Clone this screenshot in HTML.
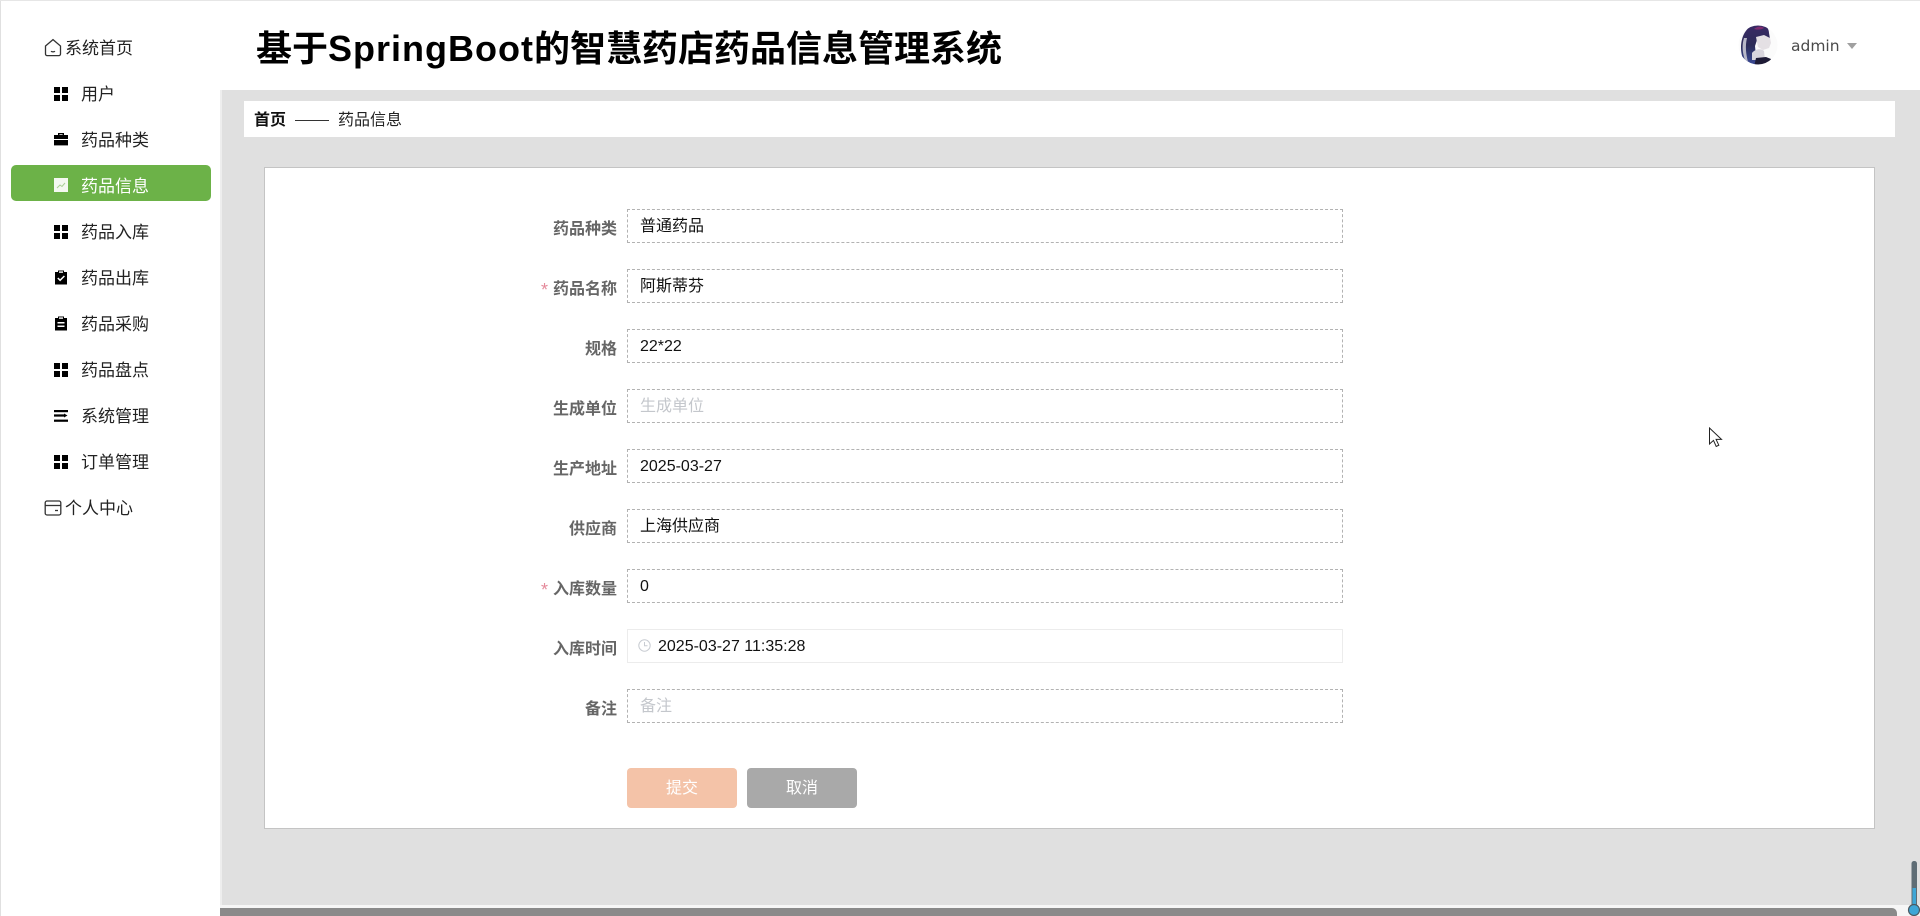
<!DOCTYPE html>
<html lang="zh-CN">
<head>
<meta charset="utf-8">
<title>基于SpringBoot的智慧药店药品信息管理系统</title>
<style>
*{box-sizing:border-box;margin:0;padding:0}
html,body{width:1920px;height:916px;overflow:hidden;background:#e0e0e0;font-family:"Liberation Sans","Noto Sans CJK SC",sans-serif;color:#111}
.a{position:absolute}
.top{left:0;top:0;width:1920px;height:1px;background:#e6e6e6}
.side{left:1px;top:1px;width:219px;height:915px;background:#fff;border-right:0}
.edge{left:220px;top:90px;width:2px;height:826px;background:#eeeeee}
.head{left:220px;top:1px;width:1700px;height:89px;background:#fff}
.title{left:256px;top:24px;font-size:36px;line-height:50px;font-weight:700;color:#000;white-space:nowrap}
.title span{letter-spacing:1px}
.m{height:24px;line-height:24px;font-size:17px;color:#222;white-space:nowrap;margin-top:1px}
.pill{left:11px;top:165px;width:200px;height:36px;background:#6cb248;border-radius:5px}
.ic{position:absolute}
.crumb{left:244px;top:101px;width:1651px;height:36px;background:#fff}
.card{left:264px;top:167px;width:1611px;height:662px;background:#fff;border:1px solid #c4c4c4}
.lb{width:120px;left:497px;height:24px;line-height:24px;text-align:right;font-size:16px;font-weight:700;color:#666;white-space:nowrap;margin-top:2px}
.star{color:#e58a9b;font-size:18px;font-weight:400;left:541px;height:24px;line-height:28px}
.in{left:627px;width:716px;height:34px;border:1px dashed #b2b2b2;background:#fff;padding-left:12px;line-height:34px;font-size:16px;color:#111;white-space:nowrap}
.ph{color:#c4c7cc}
.date{border:1px solid #ececec;padding-left:30px}
.btn{top:768px;width:110px;height:40px;border-radius:4px;color:#fff;text-align:center;line-height:41px;font-size:16px}
</style>
</head>
<body>
<div class="a top"></div>
<div class="a side"></div>
<div class="a edge"></div>
<div class="a head"></div>
<div class="a title">基于<span>SpringBoot</span>的智慧药店药品信息管理系统</div>

<!-- avatar -->
<svg class="a" style="left:1738px;top:22px" width="40" height="46" viewBox="0 0 40 46">
<defs><clipPath id="c"><circle cx="20" cy="23" r="19.5"/></clipPath>
<linearGradient id="h" x1="0" y1="0" x2="0" y2="1"><stop offset="0" stop-color="#3a2a66"/><stop offset=".5" stop-color="#2c2c58"/><stop offset="1" stop-color="#3b4c9a"/></linearGradient></defs>
<g clip-path="url(#c)">
<rect width="40" height="46" fill="#fbfbfb"/>
<path d="M3 26C3 12 10 3 20 2c7 0 11 4 11 9l1 6-5-3-7 1-3 9 2 20H8C5 38 3 32 3 26z" fill="url(#h)"/>
<path d="M6 16c-2 6-2 14 1 22l3 2c-2-8-3-16-1-24z" fill="#b8b8c8"/>
<path d="M18 15l8-2 6 3 1 5-2 5-6 2-5-3z" fill="#e4e0e4"/>
<path d="M14 31c3-4 9-5 12-2l1 9H14z" fill="#d9d6de"/>
<path d="M16 45l2-9 10-1 5 2-2 9z" fill="#1e1b36"/>
<path d="M16 7c3-3 8-3 10-1-3 2-7 2-10 1z" fill="#7d2c70"/>
</g>
</svg>
<div class="a" style="left:1791px;top:34px;line-height:24px;color:#4a4a4a;font-family:'DejaVu Sans','Liberation Sans',sans-serif;font-size:15.5px">admin</div>
<div class="a" style="left:1847px;top:43px;width:0;height:0;border-left:5px solid transparent;border-right:5px solid transparent;border-top:6px solid #a0a0a0"></div>

<!-- sidebar -->
<div class="a pill"></div>

<svg class="ic" style="left:44px;top:38px" width="18" height="19" viewBox="0 0 18 19" fill="none" stroke="#333" stroke-width="1.3"><path d="M1.5 8L9 1.6 16.5 8v8a1.6 1.6 0 0 1-1.6 1.6H3.1A1.6 1.6 0 0 1 1.5 16z"/><path d="M7 13.2c1 .8 3 .8 4 0"/></svg>
<div class="a m" style="left:65px;top:36px">系统首页</div>

<svg class="ic" style="left:54px;top:87px" width="14" height="14" fill="#000"><rect width="6" height="6"/><rect x="8" width="6" height="6"/><rect y="8" width="6" height="6"/><rect x="8" y="8" width="6" height="6"/></svg>
<div class="a m" style="left:81px;top:82px">用户</div>

<svg class="ic" style="left:54px;top:132px" width="14" height="14" viewBox="0 0 14 14"><path d="M4 3V1h6v2h4v4H0V3zM5.4 3h3.2V2.2H5.4z" fill="#000" fill-rule="evenodd"/><path d="M0 8h14v5.4H0z" fill="#000"/></svg>
<div class="a m" style="left:81px;top:128px">药品种类</div>

<svg class="ic" style="left:54px;top:178px" width="14" height="14" viewBox="0 0 14 14"><rect width="14" height="14" fill="#f4f8f1"/><path d="M3 10l3-3 2 1.5L11 5" fill="none" stroke="#a8cf94" stroke-width="1"/></svg>
<div class="a m" style="left:81px;top:174px;color:#fff">药品信息</div>

<svg class="ic" style="left:54px;top:225px" width="14" height="14" fill="#000"><rect width="6" height="6"/><rect x="8" width="6" height="6"/><rect y="8" width="6" height="6"/><rect x="8" y="8" width="6" height="6"/></svg>
<div class="a m" style="left:81px;top:220px">药品入库</div>

<svg class="ic" style="left:54px;top:270px" width="14" height="15" viewBox="0 0 14 15"><path d="M1 2h3V.5h6V2h3v12.5H1z" fill="#000"/><path d="M3.8 8l2.3 2.3L10.4 6" fill="none" stroke="#fff" stroke-width="1.5"/><rect x="5" y="1.4" width="4" height="1.4" fill="#fff"/></svg>
<div class="a m" style="left:81px;top:266px">药品出库</div>

<svg class="ic" style="left:54px;top:316px" width="14" height="15" viewBox="0 0 14 15"><path d="M1 2h3V.5h6V2h3v12.5H1z" fill="#000"/><rect x="3.5" y="6" width="7" height="1.5" fill="#fff"/><rect x="3.5" y="9.5" width="7" height="1.5" fill="#fff"/><rect x="5" y="1.4" width="4" height="1.4" fill="#fff"/></svg>
<div class="a m" style="left:81px;top:312px">药品采购</div>

<svg class="ic" style="left:54px;top:363px" width="14" height="14" fill="#000"><rect width="6" height="6"/><rect x="8" width="6" height="6"/><rect y="8" width="6" height="6"/><rect x="8" y="8" width="6" height="6"/></svg>
<div class="a m" style="left:81px;top:358px">药品盘点</div>

<svg class="ic" style="left:54px;top:410px" width="14" height="12" viewBox="0 0 14 12" fill="#000"><rect width="14" height="2.2"/><path d="M0 4.9h10V4l3.5 2-3.5 2v-.9H0z" transform="translate(0 -.5)"/><rect y="9.6" width="14" height="2.2"/></svg>
<div class="a m" style="left:81px;top:404px">系统管理</div>

<svg class="ic" style="left:54px;top:455px" width="14" height="14" fill="#000"><rect width="6" height="6"/><rect x="8" width="6" height="6"/><rect y="8" width="6" height="6"/><rect x="8" y="8" width="6" height="6"/></svg>
<div class="a m" style="left:81px;top:450px">订单管理</div>

<svg class="ic" style="left:44px;top:500px" width="18" height="16" viewBox="0 0 18 16" fill="none" stroke="#333" stroke-width="1.3"><rect x="1.2" y="1" width="15.6" height="14" rx="1.8"/><path d="M1.2 5.5h15.6"/><path d="M11 10.5h3"/></svg>
<div class="a m" style="left:65px;top:496px">个人中心</div>

<!-- breadcrumb -->
<div class="a crumb"></div>
<div class="a" style="left:254px;top:109px;font-size:16px;line-height:24px;font-weight:700;color:#111">首页</div>
<div class="a" style="left:295px;top:120px;width:34px;height:1px;background:#333"></div>
<div class="a" style="left:338px;top:109px;font-size:16px;line-height:24px;color:#222">药品信息</div>

<!-- card -->
<div class="a card"></div>

<div class="a lb" style="top:216px">药品种类</div>
<div class="a in" style="top:209px">普通药品</div>

<div class="a star" style="top:276px">*</div>
<div class="a lb" style="top:276px">药品名称</div>
<div class="a in" style="top:269px">阿斯蒂芬</div>

<div class="a lb" style="top:336px">规格</div>
<div class="a in" style="top:329px">22*22</div>

<div class="a lb" style="top:396px">生成单位</div>
<div class="a in ph" style="top:389px">生成单位</div>

<div class="a lb" style="top:456px">生产地址</div>
<div class="a in" style="top:449px">2025-03-27</div>

<div class="a lb" style="top:516px">供应商</div>
<div class="a in" style="top:509px">上海供应商</div>

<div class="a star" style="top:576px">*</div>
<div class="a lb" style="top:576px">入库数量</div>
<div class="a in" style="top:569px">0</div>

<div class="a lb" style="top:636px">入库时间</div>
<div class="a in date" style="top:629px">2025-03-27 11:35:28</div>
<svg class="a" style="left:638px;top:639px" width="13" height="13" viewBox="0 0 13 13" fill="none" stroke="#c8ccd2" stroke-width="1"><circle cx="6.5" cy="6.5" r="5.7"/><path d="M6.5 3v3.7h3"/></svg>

<div class="a lb" style="top:696px">备注</div>
<div class="a in ph" style="top:689px">备注</div>

<div class="a btn" style="left:627px;background:#f4c3a8">提交</div>
<div class="a btn" style="left:747px;background:#a9a9a9">取消</div>

<!-- cursor -->
<svg class="a" style="left:1708px;top:427px" width="15" height="21" viewBox="0 0 15 21"><path d="M1.5 1v16l4-3.6 2.7 6 2.6-1.2-2.7-5.8h5.4z" fill="#fff" stroke="#222" stroke-width="1"/></svg>

<!-- bottom scrollbar -->
<div class="a" style="left:220px;top:905px;width:1700px;height:11px;background:#f6f6f6"></div>
<div class="a" style="left:220px;top:908px;width:1677px;height:8px;background:#8a8a8a;border-radius:0 5px 0 0"></div>

<!-- thermometer widget -->
<svg class="a" style="left:1905px;top:858px" width="15" height="58" viewBox="0 0 15 58">
<rect x="6.5" y="3" width="5.5" height="50" rx="2.5" fill="#5f6d75"/>
<rect x="7.5" y="30" width="3.5" height="22" fill="#3ea6d6"/>
<circle cx="9" cy="52" r="5.5" fill="#3ea6d6" stroke="#4c5a62" stroke-width="1.2"/>
</svg>
</body>
</html>
